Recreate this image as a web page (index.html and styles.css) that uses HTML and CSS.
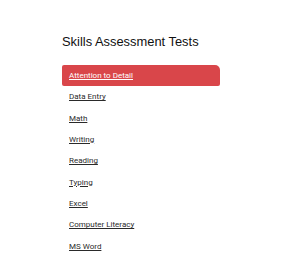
FILE: index.html
```html
<!DOCTYPE html>
<html lang="en">
<head>
    <meta charset="UTF-8">
    <meta name="viewport" content="width=device-width, initial-scale=1.0">
    <title>Skills Assessment Tests</title>
    <link rel="stylesheet" href="styles.css">
</head>
<body>
    <div class="tests">
        <h1>Skills Assessment Tests</h1>
        <ul class="test-list">
            <li class="active"><a href="#">Attention to Detail</a></li>
            <li><a href="#">Data Entry</a></li>
            <li><a href="#">Math</a></li>
            <li><a href="#">Writing</a></li>
            <li><a href="#">Reading</a></li>
            <li><a href="#">Typing</a></li>
            <li><a href="#">Excel</a></li>
            <li><a href="#">Computer Literacy</a></li>
            <li><a href="#">MS Word</a></li>
        </ul>
    </div>
</body>
</html>
```

FILE: styles.css
```css
body {
    margin: 0;
    background-color: #fff;
    font-family: Roboto, Arial, sans-serif;
    color: #222;
}
.tests {
    width: 158px;
    padding: 34px 0 0 62px;
}
h1 {
    font-family: "Liberation Sans", Arial, sans-serif;
    font-weight: normal;
    font-size: 12.9px;
    margin: 0 0 16px 0;
    color: #111;
}
.test-list {
    list-style: none;
    margin: 0;
    padding: 0;
}
.test-list li {
    height: 21.3px;
    display: flex;
    align-items: center;
    padding-left: 7px;
}
.test-list a {
    color: #2a2a2a;
    font-size: 8px;
}
.test-list li.active {
    background-color: #d9464a;
    border-radius: 2px 5px 2px 2px;
}
.test-list li.active a {
    color: #fff;
}
```
